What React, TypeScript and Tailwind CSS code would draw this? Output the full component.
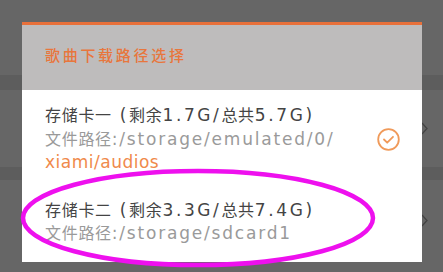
import React from 'react';

// Background list behind the dialog
function BgRow({ h }: { h: string }) {
  return (
    <div className={`flex items-center justify-end pr-[15px] ${h}`}>
      <svg width="7" height="13" viewBox="0 0 7 13" fill="none">
        <path d="M1 1l5 5.5L1 12" stroke="#444" strokeWidth="1.3" />
      </svg>
    </div>
  );
}

// latin part of a line, rendered wider than the CJK part
function L({ children, t = 'tracking-[1.8px]' }: { children: React.ReactNode; t?: string }) {
  return <span className={`text-[17px] ${t}`}>{children}</span>;
}

export default function App() {
  const font = { fontFamily: '"DejaVu Sans", "Noto Sans CJK SC", sans-serif' };

  return (
    <div className="relative w-[443px] h-[272px] overflow-hidden bg-[#666666]" style={font}>
      {/* page behind the dim layer */}
      <div className="flex flex-col">
        <div className="h-[75px]" />
        <div className="h-[15px] bg-[#5d5d5d]" />
        <BgRow h="h-[77px]" />
        <div className="h-[13px] bg-[#5d5d5d]" />
        <BgRow h="h-[80px]" />
      </div>

      {/* dialog */}
      <div className="absolute left-[22px] top-[22px] w-[400px] flex flex-col">
        <div className="h-[3px] bg-[#e8703a]" />
        <div className="h-[65px] bg-[#bebcbc] flex items-center pl-[23px] pb-[2px]">
          <span className="text-[15px] font-medium tracking-[2.7px] text-[#e8763c]">歌曲下载路径选择</span>
        </div>
        <div className="bg-white pt-[14px] pb-[16px] pl-[23px] pr-[22px] flex flex-col gap-[24px]">
          <div className="flex items-center justify-between">
            <div className="flex flex-col text-[16px] leading-[22.5px] tracking-[0.7px] whitespace-nowrap">
              <span className="text-[#444444]">
                存储卡一<L t="tracking-[2.6px]"> (</L>剩余<L t="tracking-[2.6px]">1.7G/</L>总共<L t="tracking-[2.6px]">5.7G)</L>
              </span>
              <span className="text-[#9a9a9a]">
                文件路径<L>:/storage/emulated/0/</L>
              </span>
              <span className="text-[#f08a4b]">
                <L t="tracking-[0.5px]">xiami/audios</L>
              </span>
            </div>
            <svg width="23" height="23" viewBox="0 0 23 23" fill="none">
              <circle cx="11.5" cy="11.5" r="10.3" stroke="#f09a5a" strokeWidth="1.8" />
              <path d="M7 11.5l3.2 3.2L16 8.8" stroke="#f09a5a" strokeWidth="1.8" strokeLinecap="round" strokeLinejoin="round" />
            </svg>
          </div>
          <div className="flex flex-col text-[16px] leading-[22.5px] tracking-[0.7px] whitespace-nowrap">
            <span className="text-[#444444]">
              存储卡二<L t="tracking-[2.6px]"> (</L>剩余<L t="tracking-[2.6px]">3.3G/</L>总共<L t="tracking-[2.6px]">7.4G)</L>
            </span>
            <span className="text-[#9a9a9a]">
              文件路径<L>:/storage/sdcard1</L>
            </span>
          </div>
        </div>
      </div>

      {/* magenta annotation ellipse */}
      <svg className="absolute inset-0 pointer-events-none" width="443" height="272">
        <ellipse cx="198" cy="218" rx="175" ry="47" fill="none" stroke="#ee10ee" strokeWidth="4.5" />
      </svg>
    </div>
  );
}
